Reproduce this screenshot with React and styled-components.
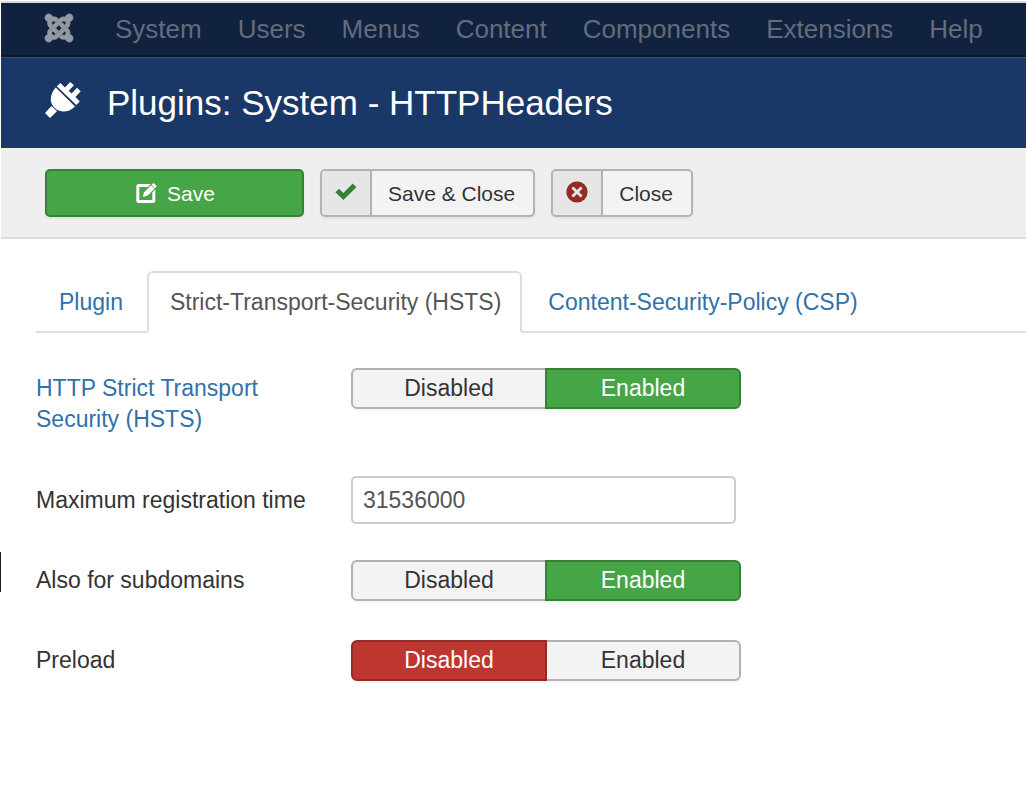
import React, { useState } from "react";
import styled, { createGlobalStyle, css } from "styled-components";
import { FaJoomla } from "react-icons/fa";

const GlobalStyle = createGlobalStyle`
  *, *::before, *::after { box-sizing: border-box; }
  body {
    margin: 0;
    background: #fff;
    color: #333;
    font-family: "Liberation Sans", Arial, Helvetica, sans-serif;
    font-size: 23px;
    line-height: 31px;
  }
  button, input { font-family: inherit; }
`;

const Page = styled.div`
  position: relative;
  min-height: 100vh;
  padding: 1px 0 0 1px;
`;

const EdgeMark = styled.span`
  position: absolute;
  left: 0;
  top: 552px;
  width: 1px;
  height: 40px;
  background: #14212b;
`;

const NavBar = styled.nav`
  display: flex;
  align-items: center;
  min-height: 56px;
  padding: 0 36px 0 42px;
  background: #11223e;
  border-top: 2px solid #d6d9de;
  border-bottom: 2px solid #0a172c;
`;

const Brand = styled.a`
  display: flex;
  width: 32px;
  margin-right: 40px;
  padding-bottom: 2px;
  color: #949aa4;

  svg {
    overflow: visible;
    stroke-width: 14px;
    stroke-linejoin: round;
  }
`;

const NavList = styled.ul`
  display: flex;
  gap: 36px;
  margin: 0;
  padding: 0;
  list-style: none;
  font-size: 26px;
`;

const NavLink = styled.a`
  color: #626c7d;
  text-decoration: none;
`;

const Header = styled.header`
  display: flex;
  align-items: center;
  gap: 25px;
  min-height: 91px;
  padding: 0 44px;
  background: #1a3867;
  border-top: 1px solid #3c5375;
  color: #fff;
`;

const HeaderIcon = styled.span`
  display: flex;
  padding-bottom: 6px;
`;

const Title = styled.h1`
  margin: 0;
  font-size: 35px;
  line-height: 40px;
  font-weight: 400;
`;

const Toolbar = styled.div`
  display: flex;
  flex-wrap: wrap;
  gap: 16px;
  padding: 21px 44px 20px;
  background: #efefef;
  border-bottom: 2px solid #dcdcdc;
`;

const ToolButton = styled.button`
  display: flex;
  align-items: stretch;
  height: 48px;
  padding: 0;
  overflow: hidden;
  border: 2px solid #b3b3b3;
  border-radius: 5px;
  background: #f3f3f3;
  box-shadow: 0 2px 3px rgba(0, 0, 0, 0.05);
  color: #333;
  font-size: 21px;
  line-height: 46px;
  cursor: pointer;

  ${(p) =>
    p.$primary &&
    css`
      justify-content: center;
      gap: 9px;
      width: 259px;
      padding-left: 2px;
      border-color: #378137;
      background: #46a546;
      color: #fff;

      svg {
        align-self: center;
      }
    `}
`;

const ButtonIcon = styled.span`
  display: flex;
  align-items: center;
  justify-content: center;
  width: 50px;
  padding-bottom: 2px;
  background: #e6e6e6;
  border-right: 2px solid #b3b3b3;
`;

const ButtonText = styled.span`
  padding: 0 18px 0 16px;
`;

const Main = styled.main`
  padding: 32px 0 0 35px;
`;

const Tabs = styled.div`
  display: flex;
  gap: 3px;
  border-bottom: 2px solid #ddd;
`;

const Tab = styled.button`
  margin-bottom: -2px;
  padding: 14px 19px 13px 21px;
  border: 2px solid transparent;
  border-radius: 6px 6px 0 0;
  background: none;
  color: #3071a9;
  font-size: 23px;
  line-height: 31px;
  cursor: pointer;

  ${(p) =>
    p.$active &&
    css`
      border-color: #ddd #ddd #fff;
      background: #fff;
      color: #555;
    `}
`;

const Form = styled.form`
  display: flex;
  flex-direction: column;
  gap: 36px;
  padding: 35px 36px 36px 0;
`;

const Row = styled.div`
  display: grid;
  grid-template-columns: 285px minmax(0, 390px);
  column-gap: 30px;
  align-items: baseline;
  min-height: 44px;
`;

const FieldLabel = styled.label`
  padding: 5px 0;
  color: ${(p) => (p.$linked ? "#3071a9" : "#333")};

  a {
    color: inherit;
    text-decoration: none;
  }
`;

const TextInput = styled.input`
  width: 385px;
  max-width: 100%;
  height: 48px;
  padding: 0 10px;
  border: 2px solid #ccc;
  border-radius: 5px;
  background: #fff;
  color: #555;
  font-size: 23px;
`;

const ToggleGroup = styled.div`
  display: flex;
  border-radius: 6px;
  box-shadow: 0 2px 3px rgba(0, 0, 0, 0.05);
`;

const ToggleOption = styled.label`
  position: relative;
  flex: 1;
  z-index: ${(p) => (p.$tone ? 1 : 0)};
  padding: 3px 0;
  border: 2px solid #b3b3b3;
  background: #f3f3f3;
  text-align: center;
  cursor: pointer;

  &:first-child {
    margin-right: -1px;
    border-radius: 6px 0 0 6px;
  }
  &:last-child {
    margin-left: -1px;
    border-radius: 0 6px 6px 0;
  }

  ${(p) =>
    p.$tone === "on" &&
    css`
      border-color: #378137;
      background: #46a546;
      color: #fff;
    `}
  ${(p) =>
    p.$tone === "off" &&
    css`
      border-color: #942a25;
      background: #bd362f;
      color: #fff;
    `}
`;

const HiddenRadio = styled.input`
  position: absolute;
  inset: 0;
  margin: 0;
  opacity: 0;
  cursor: pointer;
`;

const PlugIcon = () => (
  <svg width="37" height="37" viewBox="0 0 37 37" fill="currentColor" aria-hidden="true">
    <path d="M11.8 4.2 15.4 1 20 5.4 25.2 0 29 3.2 23.7 8.8 26.6 11.6 32 5.8 35.7 9.2 30.4 15 34.8 19.6 31.3 23.1Z" />
    <path d="M10.8 5.6 30 24.4C26 28.2 21.8 29.8 17.5 29.5 14.5 29.2 12.3 28.3 10.4 26.6L8.6 24.8C6.5 22.4 5.6 19.5 5.8 16.8 6.1 12.6 7.6 9 10.8 5.6Z" />
    <path d="M6.6 24 12 29.2 5 36 0 31Z" />
  </svg>
);

const EditIcon = () => (
  <svg width="22" height="22" viewBox="0 0 22 22" aria-hidden="true">
    <rect x="1.8" y="3.5" width="16" height="16" rx="1" fill="none" stroke="#fff" strokeWidth="3" />
    <path
      d="M6 15.8 7.4 10.2 16.4 1.2Q17.6 0 18.8 1.2L20.6 3Q21.8 4.2 20.6 5.4L11.6 14.4Z"
      fill="#fff"
      stroke="#46a546"
      strokeWidth="1.2"
    />
    <path d="M15 2.8 19 6.8" stroke="#46a546" strokeWidth="0.8" />
  </svg>
);

const CheckIcon = () => (
  <svg width="22" height="18" viewBox="0 0 22 18" aria-hidden="true">
    <path d="M.4 9.2 4 5.7 8.3 9.9 17.8.6 21.4 4.2 8.4 17Z" fill="#378137" />
  </svg>
);

const CancelIcon = () => (
  <svg width="22" height="22" viewBox="0 0 22 22" aria-hidden="true">
    <circle cx="11" cy="11" r="10.6" fill="#942a25" />
    <path d="M6.4 6.4 15.6 15.6M15.6 6.4 6.4 15.6" stroke="#e6e6e6" strokeWidth="2.8" />
  </svg>
);

function Toggle({ name, labelId, value, onChange }) {
  return (
    <ToggleGroup role="radiogroup" aria-labelledby={labelId}>
      <ToggleOption $tone={value ? null : "off"}>
        <HiddenRadio type="radio" name={name} checked={!value} onChange={() => onChange(false)} />
        Disabled
      </ToggleOption>
      <ToggleOption $tone={value ? "on" : null}>
        <HiddenRadio type="radio" name={name} checked={value} onChange={() => onChange(true)} />
        Enabled
      </ToggleOption>
    </ToggleGroup>
  );
}

const menu = ["System", "Users", "Menus", "Content", "Components", "Extensions", "Help"];
const tabs = ["Plugin", "Strict-Transport-Security (HSTS)", "Content-Security-Policy (CSP)"];

export default function App() {
  const [tab, setTab] = useState(1);
  const [hsts, setHsts] = useState(true);
  const [subdomains, setSubdomains] = useState(true);
  const [preload, setPreload] = useState(false);

  return (
    <Page>
      <GlobalStyle />
      <EdgeMark />
      <NavBar>
        <Brand href="#" aria-label="Joomla">
          <FaJoomla size={32} />
        </Brand>
        <NavList>
          {menu.map((item) => (
            <li key={item}>
              <NavLink href="#">{item}</NavLink>
            </li>
          ))}
        </NavList>
      </NavBar>
      <Header>
        <HeaderIcon>
          <PlugIcon />
        </HeaderIcon>
        <Title>Plugins: System - HTTPHeaders</Title>
      </Header>
      <Toolbar>
        <ToolButton type="button" $primary>
          <EditIcon />
          Save
        </ToolButton>
        <ToolButton type="button">
          <ButtonIcon>
            <CheckIcon />
          </ButtonIcon>
          <ButtonText>Save &amp; Close</ButtonText>
        </ToolButton>
        <ToolButton type="button">
          <ButtonIcon>
            <CancelIcon />
          </ButtonIcon>
          <ButtonText>Close</ButtonText>
        </ToolButton>
      </Toolbar>
      <Main>
        <Tabs role="tablist">
          {tabs.map((label, i) => (
            <Tab
              key={label}
              type="button"
              role="tab"
              aria-selected={i === tab}
              $active={i === tab}
              onClick={() => setTab(i)}
            >
              {label}
            </Tab>
          ))}
        </Tabs>
        <Form>
          <Row>
            <FieldLabel as="div" id="hsts-label" $linked>
              <a href="#">HTTP Strict Transport Security (HSTS)</a>
            </FieldLabel>
            <Toggle name="hsts" labelId="hsts-label" value={hsts} onChange={setHsts} />
          </Row>
          <Row>
            <FieldLabel htmlFor="max-age">Maximum registration time</FieldLabel>
            <TextInput id="max-age" type="text" defaultValue="31536000" />
          </Row>
          <Row>
            <FieldLabel as="div" id="subdomains-label">Also for subdomains</FieldLabel>
            <Toggle name="subdomains" labelId="subdomains-label" value={subdomains} onChange={setSubdomains} />
          </Row>
          <Row>
            <FieldLabel as="div" id="preload-label">Preload</FieldLabel>
            <Toggle name="preload" labelId="preload-label" value={preload} onChange={setPreload} />
          </Row>
        </Form>
      </Main>
    </Page>
  );
}
